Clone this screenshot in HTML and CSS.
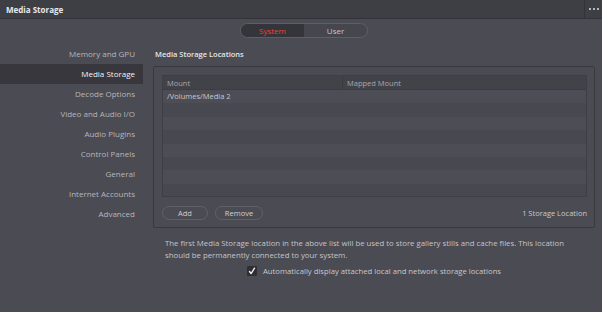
FILE: index.html
```html
<!DOCTYPE html>
<html>
<head>
<meta charset="utf-8">
<link rel="stylesheet" href="styles.css">
</head>
<body>
<div class="window">
  <header class="titlebar">
    <div class="title">Media Storage</div>
    <div class="menu"><span></span><span></span><span></span></div>
  </header>
  <div class="seg-row">
    <div class="seg">
      <div class="seg-item active">System</div>
      <div class="seg-item">User</div>
    </div>
  </div>
  <div class="main">
    <nav class="sidebar">
      <div class="nav-item">Memory and GPU</div>
      <div class="nav-item selected">Media Storage</div>
      <div class="nav-item">Decode Options</div>
      <div class="nav-item">Video and Audio I/O</div>
      <div class="nav-item">Audio Plugins</div>
      <div class="nav-item">Control Panels</div>
      <div class="nav-item">General</div>
      <div class="nav-item">Internet Accounts</div>
      <div class="nav-item">Advanced</div>
    </nav>
    <section class="panel">
      <div class="panel-title">Media Storage Locations</div>
      <div class="group">
        <div class="table">
          <div class="thead">
            <div class="col c1">Mount</div>
            <div class="col c2">Mapped Mount</div>
          </div>
          <div class="row"><div class="col c1">/Volumes/Media 2</div><div class="col c2"></div></div>
          <div class="row alt"></div>
          <div class="row"></div>
          <div class="row alt"></div>
          <div class="row"></div>
          <div class="row alt"></div>
          <div class="row"></div>
          <div class="row alt"></div>
        </div>
        <div class="actions">
          <button class="btn btn-add">Add</button>
          <button class="btn btn-remove">Remove</button>
          <div class="count">1 Storage Location</div>
        </div>
      </div>
      <p class="note">The first Media Storage location in the above list will be used to store gallery stills and cache files. This location should be permanently connected to your system.</p>
      <label class="check">
        <span class="box"><svg width="8" height="8" viewBox="0 0 8 8"><path d="M1.5 4.5 L3.2 6.5 L6.5 1.2" fill="none" stroke="#f2f2f2" stroke-width="1.4" stroke-linecap="round" stroke-linejoin="round"/></svg></span>
        <span>Automatically display attached local and network storage locations</span>
      </label>
    </section>
  </div>
</div>
</body>
</html>
```
FILE: styles.css
```css
* { box-sizing: border-box; }
html, body { margin: 0; padding: 0; }
body {
  width: 602px;
  height: 312px;
  background: #4b4b53;
  font-family: "Open Sans", "Noto Sans", sans-serif;
  color: #c4c4c9;
  overflow: hidden;
}
.window { width: 602px; height: 312px; display: flex; flex-direction: column; }
.titlebar {
  height: 19px;
  background: #3e3e45;
  border-bottom: 1px solid #333339;
  display: flex;
  align-items: center;
  justify-content: space-between;
}
.title {
  padding-left: 6px;
  font-size: 8px;
  font-weight: 700;
  color: #e8e8ea;
}
.menu {
  height: 18px;
  width: 18px;
  border-left: 1px solid #333339;
  display: flex;
  align-items: center;
  justify-content: center;
  gap: 2px;
}
.menu span { width: 2px; height: 2px; background: #b8b8bc; }
.seg-row { display: flex; justify-content: center; padding-top: 4px; padding-left: 6px; }
.seg {
  display: flex;
  height: 15px;
  border: 1px solid #5e5e66;
  border-radius: 8px;
  overflow: hidden;
  background: #46464e;
}
.seg-item {
  font-size: 8px;
  line-height: 13px;
  text-align: center;
  color: #c8c8cc;
}
.seg-item.active { width: 63px; background: #34343a; color: #e2453c; }
.seg-item:last-child { width: 63px; }
.main { display: flex; padding-top: 6px; }
.sidebar { width: 143px; display: flex; flex-direction: column; }
.nav-item {
  height: 20px;
  line-height: 20px;
  text-align: right;
  padding-right: 8px;
  font-size: 8px;
  color: #b6b6bb;
}
.nav-item.selected { background: #37373d; color: #f2f2f4; }
.panel { flex: 1; padding-left: 10px; padding-right: 7px; }
.panel-title {
  height: 20px;
  line-height: 20px;
  font-size: 7.5px;
  font-weight: 600;
  color: #e6e6e8;
  padding-left: 2px;
}
.group {
  margin-top: 2px;
  border: 1px solid #38383e;
  border-radius: 2px;
  padding: 8px 7px 7px 8px;
}
.table {
  border: 1px solid #3e3e45;
  height: 122px;
  background: #4a4a52;
  overflow: hidden;
}
.thead {
  display: flex;
  height: 14px;
  background: #424249;
  border-bottom: 1px solid #3c3c43;
}
.thead .col { line-height: 14px; }
.col { font-size: 7.5px; color: #a8a8ae; padding-left: 4px; }
.c1 { width: 180px; }
.thead .c1 { border-right: 1px solid #3a3a40; }
.c2 { flex: 1; }
.row { display: flex; height: 13.4px; background: #4d4d55; }
.row .col { line-height: 13px; color: #c8c8cc; font-size: 7.5px; }
.row.alt { background: #484850; }
.actions { display: flex; align-items: center; margin-top: 9px; gap: 7px; }
.btn {
  height: 14px;
  border: 1px solid #606068;
  border-radius: 7px;
  background: transparent;
  color: #d0d0d4;
  font-family: inherit;
  font-size: 7.5px;
  padding: 0;
  line-height: 12px;
}
.btn-add { width: 46px; }
.btn-remove { width: 48px; }
.count { margin-left: auto; font-size: 7.5px; color: #c8c8cc; padding-right: 0; }
.note {
  margin: 9px 0 0 12px;
  font-size: 7.8px;
  line-height: 12px;
  color: #c4c4c9;
  width: 420px;
}
.check {
  display: flex;
  align-items: center;
  gap: 6px;
  margin: 5px 0 0 94px;
  font-size: 7.7px;
  color: #c8c8cc;
}
.box {
  width: 10px; height: 10px;
  background: #2e2e33;
  border-radius: 1px;
  display: flex; align-items: center; justify-content: center;
}
```
